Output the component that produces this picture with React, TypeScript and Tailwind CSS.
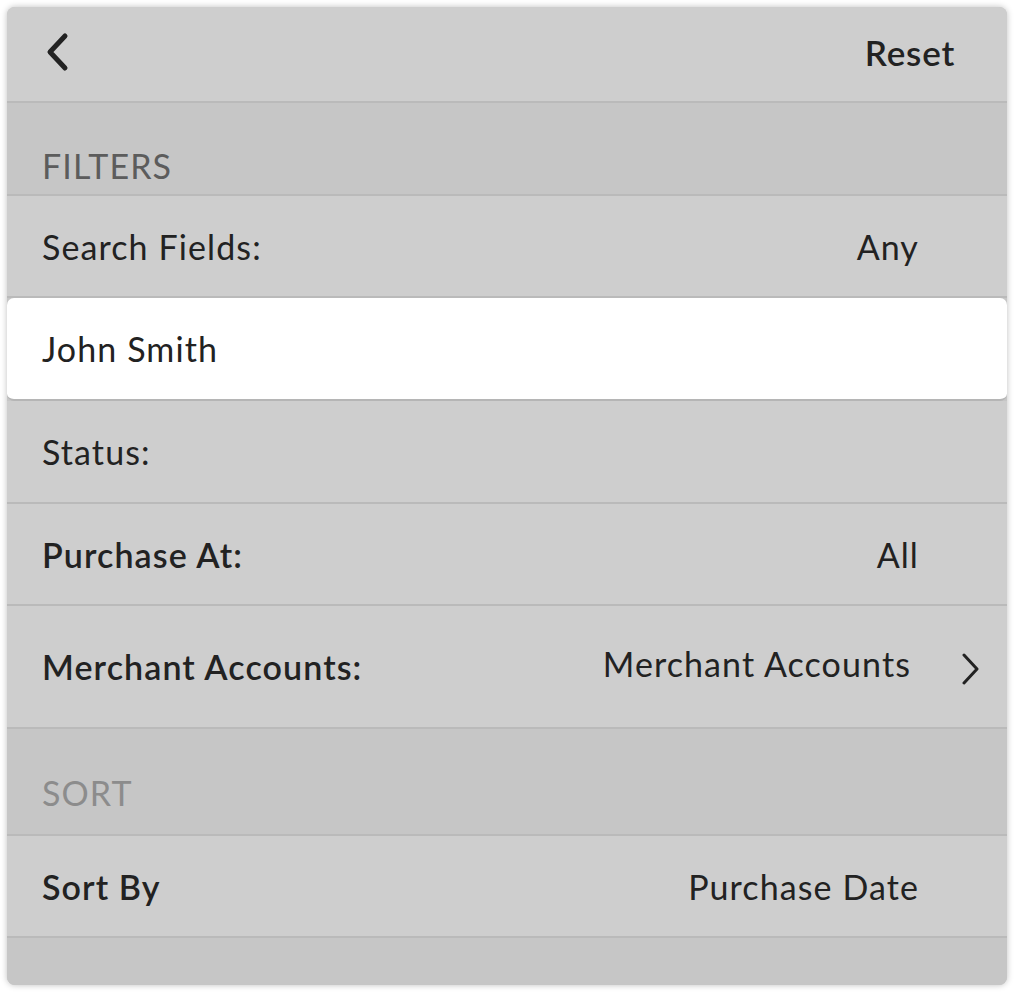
import React from "react";

const font = { fontFamily: "Lato, 'Open Sans', sans-serif" };

function Row({
  label,
  value,
  bold,
  chevron,
  h,
}: {
  label: string;
  value?: string;
  bold?: boolean;
  chevron?: boolean;
  h: string;
}) {
  return (
    <div className={`flex items-center border-b-2 border-[#bababa] pl-[35px] ${chevron ? "pr-[96px]" : "pr-[88px]"} ${h} relative`}>
      <span className={`text-[34px] tracking-[1.1px] text-[#222] ${bold ? "font-semibold tracking-[0.8px]" : "font-normal"}`}>{label}</span>
      <span className={`ml-auto text-[34px] tracking-[1.1px] text-[#222] ${chevron ? "-mt-[6px]" : ""}`}>{value}</span>
      {chevron && (
        <svg className="absolute right-[26px] top-[47px]" width="20" height="32" viewBox="0 0 20 32" fill="none">
          <path d="M3 2 L16 16 L3 30" stroke="#222" strokeWidth="3" strokeLinecap="round" strokeLinejoin="round" />
        </svg>
      )}
    </div>
  );
}

export default function App() {
  return (
    <div className="w-[1015px] h-[992px] bg-white p-[7px]" style={font}>
      <div className="w-[1000px] h-[978px] rounded-[8px] overflow-hidden bg-[#c6c6c6] shadow-[0_0_6px_rgba(0,0,0,0.25)] flex flex-col">
        <div className="h-[96px] bg-[#cecece] border-b-2 border-[#bababa] flex items-center pl-[38px] pr-[52px] pb-[4px] shrink-0">
          <svg width="26" height="40" viewBox="0 0 26 40" fill="none">
            <path d="M20 4 L5 20 L20 36" stroke="#222" strokeWidth="5" strokeLinecap="round" strokeLinejoin="round" />
          </svg>
          <span className="ml-auto text-[35px] tracking-[0.8px] font-semibold text-[#222]">Reset</span>
        </div>
        <div className="h-[93px] bg-[#c6c6c6] border-b-2 border-[#bababa] pl-[35px] pt-[46px] shrink-0">
          <span className="text-[34px] tracking-[1.1px] text-[#5c5c5c] leading-none">FILTERS</span>
        </div>
        <div className="bg-[#cecece] flex flex-col shrink-0">
          <Row label="Search Fields:" value="Any" h="h-[102px]" />
        </div>
        <div className="h-[103px] bg-white rounded-[7px] border-b-2 border-[#b5b5b5] flex items-center pl-[35px] shrink-0">
          <span className="text-[34px] tracking-[1.1px] text-[#222]">John Smith</span>
        </div>
        <div className="bg-[#cecece] flex flex-col shrink-0">
          <Row label="Status:" h="h-[103px]" />
          <Row label="Purchase At:" value="All" bold h="h-[102px]" />
          <Row label="Merchant Accounts:" value="Merchant Accounts" bold chevron h="h-[123px]" />
        </div>
        <div className="h-[107px] bg-[#c6c6c6] border-b-2 border-[#bababa] pl-[35px] pt-[47px] shrink-0">
          <span className="text-[34px] tracking-[1.1px] text-[#8c8c8c] leading-none">SORT</span>
        </div>
        <div className="bg-[#cecece] flex flex-col shrink-0">
          <Row label="Sort By" value="Purchase Date" bold h="h-[102px]" />
        </div>
        <div className="flex-1 bg-[#c6c6c6]" />
      </div>
    </div>
  );
}
